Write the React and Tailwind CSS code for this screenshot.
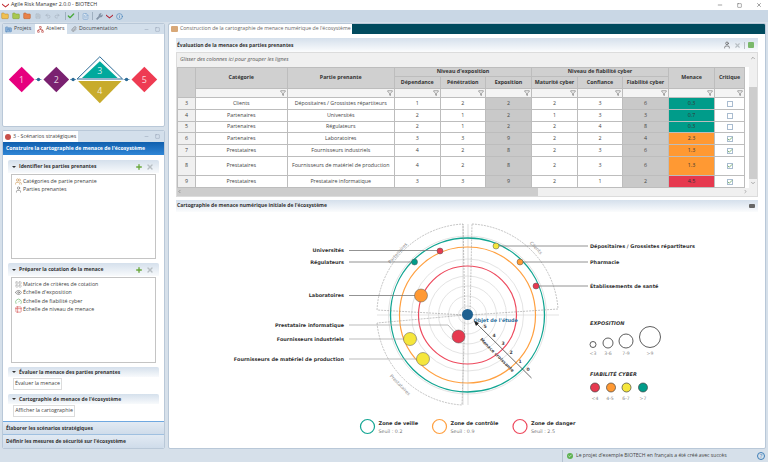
import { ChevronUp, ChevronDown, ChevronLeft, ChevronRight, Check, Filter, Plus, X, Minus, Square, Paperclip, Folder, Save, Undo2, Redo2, FileText, Wrench, Info, User, FolderKanban, Network, Table2, Users, Eye, Gauge, LayoutGrid } from 'lucide-react';

const rows = [
  { id: 3, cat: 'Clients', part: 'Dépositaires / Grossistes répartiteurs', dep: 1, pen: 2, exp: 2, mat: 2, conf: 3, fiab: 6, men: '0.3', bg: 'bg-[#009c8a]', crit: false, h: 'h-[12px]' },
  { id: 4, cat: 'Partenaires', part: 'Universités', dep: 2, pen: 1, exp: 2, mat: 1, conf: 3, fiab: 3, men: '0.7', bg: 'bg-[#009c8a]', crit: false, h: 'h-[12px]' },
  { id: 5, cat: 'Partenaires', part: 'Régulateurs', dep: 2, pen: 1, exp: 2, mat: 2, conf: 4, fiab: 8, men: '0.3', bg: 'bg-[#009c8a]', crit: false, h: 'h-[11px]' },
  { id: 6, cat: 'Partenaires', part: 'Laboratoires', dep: 3, pen: 3, exp: 9, mat: 2, conf: 2, fiab: 4, men: '2.3', bg: 'bg-[#ff9933]', crit: true, h: 'h-[12px]' },
  { id: 7, cat: 'Prestataires', part: 'Fournisseurs industriels', dep: 4, pen: 2, exp: 8, mat: 2, conf: 3, fiab: 6, men: '1.3', bg: 'bg-[#ff9933]', crit: true, h: 'h-[12px]' },
  { id: 8, cat: 'Prestataires', part: 'Fournisseurs de matériel de production', dep: 4, pen: 2, exp: 8, mat: 2, conf: 3, fiab: 6, men: '1.3', bg: 'bg-[#ff9933]', crit: true, h: 'h-[19px]' },
  { id: 9, cat: 'Prestataires', part: 'Prestataire informatique', dep: 3, pen: 3, exp: 9, mat: 2, conf: 1, fiab: 2, men: '4.5', bg: 'bg-[#e6394f]', crit: true, h: 'h-[12px]' },
];

const cell = 'border border-[#bdbdbd] p-0 text-center';
const th = 'border border-[#bdbdbd] bg-[#d0d0d0] p-0 text-center font-bold text-[#333]';

function FilterCell() {
  return (
    <td className={`${cell} bg-[#f4f4f4]`}>
      <div className="flex justify-end pr-[1px]">
        <Filter size={6} className="text-[#555]" strokeWidth={2} />
      </div>
    </td>
  );
}

function SectionHeader({ title, actions, small }) {
  return (
    <div className={`mx-[5px] flex shrink-0 items-center rounded-t-[2px] bg-gradient-to-b from-[#d5e0ec] to-[#f8fafc] pl-[4px] pr-[5px] ${small ? 'h-[10px]' : 'h-[13px]'}`}>
      <span className="mr-[3px] h-0 w-0 border-x-[2px] border-t-[2px] border-x-transparent border-t-[#333]" />
      <span className="flex-1 text-[5px] font-bold text-[#333]">{title}</span>
      {actions && (
        <div className="flex items-center gap-[3px]">
          <Plus size={8} strokeWidth={4} className="text-[#6aa83c]" />
          <X size={8} strokeWidth={4} className="text-[#b8bfc4]" />
        </div>
      )}
    </div>
  );
}

function ListBox({ items, className }) {
  return (
    <div className={`mx-[8px] mt-[1px] shrink-0 border border-[#c4c4c4] bg-white pl-[3px] pt-[2px] ${className}`}>
      {items.map(([label, Icon, color]) => (
        <div key={label} className="flex h-[8.5px] items-center gap-[1px] text-[#444]">
          <Icon size={7} strokeWidth={2} className={color} />
          {label}
        </div>
      ))}
    </div>
  );
}

function Diamonds() {
  return (
    <svg width="161" height="93" viewBox="3 34 161 93">
      <polygon points="21,67 34,80 21,93 8,80" fill="#e6007e" />
      <polygon points="56,67 69,80 56,93 43,80" fill="#7a2170" />
      <polygon points="100,57 123,79.5 77,79.5" fill="#fff" stroke="#2a6a96" strokeWidth="1" />
      <polygon points="100,61.5 118,78.5 82,78.5" fill="#00a99d" />
      <polygon points="78,81.5 122,81.5 100,104" fill="#c8ab2c" />
      <polygon points="145,67 158,80 145,93 132,80" fill="#ee3b52" />
      {[38, 73, 127].map((x) => (
        <g key={x}>
          <line x1={x - 3} x2={x + 3} y1="80" y2="80" stroke="#2a6a96" strokeWidth="0.7" />
          <circle cx={x} cy="80" r="1.7" fill="#2a6a96" />
        </g>
      ))}
      <g fill="#fff" fillOpacity="0.8" fontFamily="'Open Sans', sans-serif" fontSize="9" textAnchor="middle">
        <text x="21" y="84">1</text>
        <text x="56" y="84">2</text>
        <text x="100" y="74.5">3</text>
        <text x="100" y="95">4</text>
        <text x="145" y="84">5</text>
      </g>
    </svg>
  );
}

function Radar() {
  const pts = [
    [439, 251, 3, '#e6394f'],
    [413.5, 262, 3, '#009c8a'],
    [420, 295.5, 6.5, '#ff9933'],
    [457.5, 336.5, 6.5, '#e6394f'],
    [409, 339, 6.5, '#f5e63c'],
    [422, 359, 6.5, '#f5e63c'],
    [495, 246, 3, '#f5e63c'],
    [519, 262, 3, '#ff9933'],
    [535, 286, 3, '#e6394f'],
  ];
  const left = [
    ['Universités', 252],
    ['Régulateurs', 263.5],
    ['Laboratoires', 297],
    ['Prestataire informatique', 327],
    ['Fournisseurs industriels', 340.5],
    ['Fournisseurs de matériel de production', 361],
  ];
  const right = [
    ['Dépositaires / Grossistes répartiteurs', 247.5],
    ['Pharmacie', 263.5],
    ['Établissements de santé', 288],
  ];
  const font = "'DejaVu Sans', sans-serif";
  return (
    <svg width="596" height="236" viewBox="168 212 596 236" fontFamily={font} className="shrink-0">
      {/* fond gris */}
      {[9, 19, 29, 39, 56, 79].map((r) => (
        <circle key={r} cx="466.5" cy="315" r={r} fill="none" stroke="#e4e4e4" strokeWidth="1" />
      ))}
      <line x1="376" x2="558" y1="315" y2="315" stroke="#dcdcdc" strokeWidth="0.8" />
      <line x1="462" x2="462" y1="224" y2="405" stroke="#c8c8c8" strokeWidth="0.6" />
      <line x1="467" x2="467" y1="224" y2="405" stroke="#c8c8c8" strokeWidth="0.6" />

      <circle cx="466.5" cy="315" r="49" fill="none" stroke="#ee4a5e" strokeWidth="1.2" />
      <circle cx="466.5" cy="315" r="68" fill="none" stroke="#ffa040" strokeWidth="1.2" />
      <circle cx="466.5" cy="315" r="77" fill="none" stroke="#12a592" strokeWidth="1.3" />

      {/* secteurs */}
      <g fill="none" stroke="#888" strokeWidth="0.5" strokeDasharray="2 1">
        <path d="M376 310 A91 91 0 0 1 462 224 L464 315 Z" />
        <path d="M376 323 A91 91 0 0 0 461 405 L464 315 Z" />
        <path d="M471 224 A91 91 0 0 1 557 309 L469 315 Z" />
      </g>
      <g fill="#888" fontSize="4.6" textAnchor="middle">
        <text x="398" y="254" transform="rotate(-48 398 254)">Partenaires</text>
        <text x="398" y="386" transform="rotate(46 398 386)">Prestataires</text>
        <text x="534" y="249" transform="rotate(46 534 249)">Clients</text>
      </g>

      {/* liens */}
      <g fill="none" stroke="#777" strokeWidth="0.8">
        <path d="M348 250.5 H439" />
        <path d="M348 262 H413" />
        <path d="M348 295.5 H420" />
        <path d="M348 325 H447 L457 336" stroke="#aaa" />
        <path d="M348 339 H409" stroke="#aaa" />
        <path d="M348 359 H422" stroke="#aaa" />
        <path d="M495 246 H587" />
        <path d="M519 262 H587" />
        <path d="M535 286 H587" />
      </g>
      {pts.map(([x, y, r, c]) => (
        <circle key={`${x}-${y}`} cx={x} cy={y} r={r} fill={c} stroke="#555" strokeWidth="0.5" />
      ))}
      <circle cx="466.5" cy="314.5" r="5.5" fill="#1f6191" />
      <text x="472.5" y="321.5" fill="#2a6f9e" fontSize="4.9" fontWeight="bold">Objet de l'étude</text>

      {left.map(([t, y]) => (
        <text key={t} x="343" y={y} textAnchor="end" fontSize="4.95" fontWeight="bold" fill="#333">{t}</text>
      ))}
      {right.map(([t, y]) => (
        <text key={t} x="589" y={y} fontSize="4.95" fontWeight="bold" fill="#333">{t}</text>
      ))}

      {/* echelle */}
      <line x1="530.5" y1="378" x2="474" y2="322" stroke="#444" strokeWidth="0.8" />
      <polygon points="473,321 478,323 475,326" fill="#222" />
      <text x="495" y="356" transform="rotate(45 495 356)" textAnchor="middle" fontSize="4.4" fontWeight="bold" fill="#444">Menace croissante</text>
      <g fontSize="4.6" fontWeight="bold" fill="#444" textAnchor="middle">
        {[['5', 484, 328], ['4', 493, 337], ['3', 502, 345], ['2', 510, 354], ['1', 519, 363], ['0', 527, 371]].map(([n, x, y]) => (
          <text key={n} x={x} y={y}>{n}</text>
        ))}
      </g>

      {/* legendes */}
      <text x="589" y="325" fontSize="5" fontWeight="bold" fontStyle="italic" fill="#333">EXPOSITION</text>
      {[[592, 344.5, 3], [607, 343, 5], [625, 341, 7], [649, 337, 10.5]].map(([x, y, r]) => (
        <circle key={x} cx={x} cy={y} r={r} fill="#fff" stroke="#333" strokeWidth="0.8" />
      ))}
      <g fontSize="4.6" fill="#888" textAnchor="middle">
        <text x="592" y="355">&lt;3</text>
        <text x="607" y="355">3-6</text>
        <text x="625" y="355">7-9</text>
        <text x="649" y="355">&gt;9</text>
      </g>
      <text x="589" y="376" fontSize="5" fontWeight="bold" fontStyle="italic" fill="#333">FIABILITÉ CYBER</text>
      {[[594, '#e6394f'], [610, '#ff9933'], [625.5, '#f5e63c'], [642, '#009c8a']].map(([x, c]) => (
        <circle key={x} cx={x} cy="387.5" r="4.5" fill={c} stroke="#444" strokeWidth="0.7" />
      ))}
      <g fontSize="4.6" fill="#888" textAnchor="middle">
        <text x="594" y="399.5">&lt;4</text>
        <text x="609" y="399.5">4-5</text>
        <text x="625" y="399.5">6-7</text>
        <text x="642" y="399.5">&gt;7</text>
      </g>

      {[
        [366.5, '#12a592', 'Zone de veille', 'Seuil : 0.2'],
        [438.5, '#ffa040', 'Zone de contrôle', 'Seuil : 0.9'],
        [519, '#ee4a5e', 'Zone de danger', 'Seuil : 2.5'],
      ].map(([x, c, t, s]) => (
        <g key={t}>
          <circle cx={x} cy="426.5" r="7" fill="none" stroke={c} strokeWidth="1.2" />
          <text x={x + 11} y="424.5" fontSize="5" fontWeight="bold" fill="#333">{t}</text>
          <text x={x + 11} y="432.5" fontSize="4.8" fill="#777">{s}</text>
        </g>
      ))}
    </svg>
  );
}

export default function App() {
  return (
    <div className="flex h-[462px] w-[768px] flex-col overflow-hidden bg-[#d6e0ea] font-['Open_Sans',sans-serif] text-[5.3px] leading-none text-[#444]">
      {/* barre de titre */}
      <div className="flex h-[10px] shrink-0 items-center bg-white pl-[2px] pr-[4px]">
        <svg width="7" height="5" viewBox="0 0 10 6" className="mr-[2px]">
          <path d="M0 0 L5 4 L10 0 L10 2 L5 6 L0 2 Z" fill="#c0272d" />
        </svg>
        <span className="flex-1 text-[#333]">Agile Risk Manager 2.0.0 - BIOTECH</span>
        <div className="flex items-center gap-[14px] pr-[2px] text-[#444]">
          <Minus size={6} />
          <Square size={5} />
          <X size={6} />
        </div>
      </div>

      {/* barre d'outils */}
      <div className="flex h-[12px] shrink-0 items-center bg-[#c9d7e5] pl-[1px]">
        <Folder size={8} fill="#f0c050" strokeWidth={1.5} className="text-[#b8862a]" />
        <Folder size={8} fill="#a8c850" strokeWidth={1.5} className="ml-[3px] text-[#7a9a30]" />
        <Folder size={8} fill="#e8824a" strokeWidth={1.5} className="ml-[3px] text-[#b85a2a]" />
        <Save size={6} fill="#c2ccd6" strokeWidth={1.5} className="ml-[4px] text-[#a9b6c3]" />
        <Undo2 size={6} strokeWidth={3} className="ml-[4px] text-[#a9b6c3]" />
        <Redo2 size={6} strokeWidth={3} className="ml-[3px] text-[#a9b6c3]" />
        <span className="ml-[5px] h-[8px] w-px bg-[#9fb0c0]" />
        <Check size={8} strokeWidth={4} className="ml-[1px] text-[#4aa83c]" />
        <span className="ml-[3px] h-[8px] w-px bg-[#9fb0c0]" />
        <FileText size={7} fill="#e8eef4" strokeWidth={1.5} className="ml-[3px] text-[#4d86c0]" />
        <span className="ml-[3px] h-[8px] w-px bg-[#9fb0c0]" />
        <Wrench size={7} fill="#8a9aac" strokeWidth={1.5} className="ml-[3px] text-[#6f8194]" />
        <svg width="7" height="5" viewBox="0 0 10 6" className="ml-[3px]">
          <path d="M0 0 L5 4 L10 0 L10 2 L5 6 L0 2 Z" fill="#b02030" />
        </svg>
        <Info size={7} strokeWidth={2} className="ml-[3px] text-[#3f7fb8]" />
      </div>

      <div className="flex min-h-0 flex-1 gap-[3px] px-[2px] pb-[1px] pt-[1px]">
        {/* colonne gauche */}
        <div className="flex w-[163px] flex-col gap-[3px]">
          <div className="flex h-[104px] shrink-0 flex-col overflow-hidden rounded-[2px] border border-[#b9c8d8] bg-white">
            <div className="flex h-[10px] shrink-0 items-stretch bg-[#d3dfeb]">
              <div className="flex w-[32px] items-center gap-[2px] pl-[2px]">
                <FolderKanban size={7} fill="#8fb4da" strokeWidth={1.5} className="text-[#3f78b4]" />
                Projets
              </div>
              <div className="flex w-[32px] items-center gap-[2px] bg-white pl-[2px]">
                <Network size={7} strokeWidth={2} className="text-[#c0504a]" />
                Ateliers
              </div>
              <div className="flex items-center gap-[2px] pl-[4px]">
                <Paperclip size={6} className="text-[#777]" />
                Documentation
              </div>
              <div className="ml-auto flex items-center gap-[6px] pr-[4px] text-[#8a9aac]">
                <Minus size={5} />
                <Square size={5} />
              </div>
            </div>
            <Diamonds />
          </div>

          <div className="flex min-h-0 flex-1 flex-col overflow-hidden rounded-[2px] border border-[#b9c8d8] bg-white">
            <div className="flex h-[11px] shrink-0 items-stretch bg-[#d3dfeb]">
              <div className="flex items-center gap-[2px] bg-white px-[2px]">
                <span className="h-[6px] w-[6px] rounded-full bg-[#c8504a]" />
                3 - Scénarios stratégiques
              </div>
              <div className="ml-auto flex items-center gap-[6px] pr-[4px] text-[#8a9aac]">
                <Minus size={5} />
                <Square size={5} />
              </div>
            </div>
            <div className="flex h-[13px] shrink-0 items-center bg-gradient-to-b from-[#0f5fae] to-[#2f86d6] pl-[3px] text-[5.15px] font-bold text-white">
              Construire la cartographie de menace de l'écosystème
            </div>
            <div className="flex min-h-0 flex-1 flex-col pt-[5px]">
              <SectionHeader title="Identifier les parties prenantes" actions />
              <ListBox
                className="h-[85px]"
                items={[['Catégories de partie prenante', Users, 'text-[#c8904a]'], ['Parties prenantes', User, 'text-[#666]']]}
              />
              <div className="h-[4px] shrink-0" />
              <SectionHeader title="Préparer la cotation de la menace" actions />
              <ListBox
                className="h-[86px]"
                items={[
                  ['Matrice de critères de cotation', LayoutGrid, 'text-[#aaa]'],
                  ["Échelle d'exposition", Eye, 'text-[#666]'],
                  ['Échelle de fiabilité cyber', Gauge, 'text-[#5cae5c]'],
                  ['Échelle de niveau de menace', Table2, 'text-[#d85a5a]'],
                ]}
              />
              <div className="h-[4px] shrink-0" />
              <SectionHeader small title="Évaluer la menace des parties prenantes" />
              <button type="button" className="ml-[10px] mt-[1px] h-[12px] w-[49px] shrink-0 border border-[#dcdcdc] bg-white text-[#444]">Évaluer la menace</button>
              <div className="h-[4px] shrink-0" />
              <SectionHeader small title="Cartographie de menace de l'écosystème" />
              <button type="button" className="ml-[10px] mt-[1px] h-[12px] w-[62px] shrink-0 border border-[#dcdcdc] bg-white text-[#444]">Afficher la cartographie</button>
            </div>
            <div className="flex h-[13px] shrink-0 items-center border-t border-[#6fa8e0] bg-gradient-to-b from-[#e2eaf3] to-[#cfdcea] pl-[3px] text-[5px] font-bold text-[#333]">
              Élaborer les scénarios stratégiques
            </div>
            <div className="flex h-[14px] shrink-0 items-center border-t border-[#9fc0e0] bg-gradient-to-b from-[#e2eaf3] to-[#cfdcea] pl-[3px] text-[5px] font-bold text-[#333]">
              Définir les mesures de sécurité sur l'écosystème
            </div>
          </div>
        </div>

        {/* zone principale */}
        <div className="flex min-w-0 flex-1 flex-col overflow-hidden rounded-[2px] border border-[#b9c8d8] bg-white">
          <div className="flex h-[10px] shrink-0 bg-[#004a5e]">
            <div className="flex w-[183px] items-center gap-[2px] whitespace-nowrap bg-white pl-[2px] text-[5.15px] text-[#666]">
              <span className="h-[6px] w-[7px] shrink-0 rounded-[1px] bg-[#d8a878]" />
              Construction de la cartographie de menace numérique de l'écosystème
            </div>
          </div>

          <div className="mx-[7px] mt-[4px] flex h-[14px] shrink-0 items-center justify-between bg-gradient-to-b from-[#d5e0ec] to-[#fbfcfd] px-[1px] text-[5px] font-bold text-[#333]">
            Évaluation de la menace des parties prenantes
            <div className="flex items-center gap-[3px] pr-[3px]">
              <User size={8} strokeWidth={2} className="text-[#555]" />
              <X size={7} strokeWidth={4} className="text-[#b8bfc4]" />
              <span className="h-[7px] w-px bg-[#b8bfc4]" />
              <span className="h-[6px] w-[6px] rounded-[1px] bg-[#7ab86a]" />
            </div>
          </div>

          <div className="mx-[7px] flex shrink-0 border border-[#dcdcdc]">
            <div className="w-[572px]">
              <div className="flex h-[14px] items-center bg-[#f0f0f0] pl-[3px] italic text-[#555]">
                Glisser des colonnes ici pour grouper les lignes
              </div>
              <table className="w-[572px] table-fixed border-collapse">
                <colgroup>
                  <col className="w-[18px]" />
                  <col className="w-[91.5px]" />
                  <col className="w-[107.5px]" />
                  <col className="w-[45.5px]" />
                  <col className="w-[45.5px]" />
                  <col className="w-[46px]" />
                  <col className="w-[46px]" />
                  <col className="w-[45px]" />
                  <col className="w-[46px]" />
                  <col className="w-[46px]" />
                  <col className="w-[30px]" />
                  <col className="w-[5px]" />
                </colgroup>
                <thead>
                  <tr className="h-[9px]">
                    <th rowSpan={3} className={th} />
                    <th rowSpan={2} className={th}>Catégorie</th>
                    <th rowSpan={2} className={th}>Partie prenante</th>
                    <th colSpan={3} className={th}>Niveau d'exposition</th>
                    <th colSpan={3} className={th}>Niveau de fiabilité cyber</th>
                    <th rowSpan={2} className={th}>Menace</th>
                    <th rowSpan={2} className={th}>Critique</th>
                    <th rowSpan={3} className="p-0" />
                  </tr>
                  <tr className="h-[12px]">
                    <th className={th}>Dépendance</th>
                    <th className={th}>Pénétration</th>
                    <th className={th}>Exposition</th>
                    <th className={th}>Maturité cyber</th>
                    <th className={th}>Confiance</th>
                    <th className={th}>Fiabilité cyber</th>
                  </tr>
                  <tr className="h-[9px]">
                    {Array.from({ length: 10 }, (_, i) => <FilterCell key={i} />)}
                  </tr>
                </thead>
                <tbody>
                  {rows.map((r) => (
                    <tr key={r.id} className={r.h}>
                      <td className={`${cell} bg-[#f0f0f0]`}>{r.id}</td>
                      <td className={cell}>{r.cat}</td>
                      <td className={cell}>{r.part}</td>
                      <td className={cell}>{r.dep}</td>
                      <td className={cell}>{r.pen}</td>
                      <td className={`${cell} bg-[#c9c9c9]`}>{r.exp}</td>
                      <td className={cell}>{r.mat}</td>
                      <td className={cell}>{r.conf}</td>
                      <td className={`${cell} bg-[#c9c9c9]`}>{r.fiab}</td>
                      <td className={`${cell} ${r.bg} text-[#333]`}>{r.men}</td>
                      <td className={cell}>
                        <div className="flex justify-center">
                          <span className="flex h-[6px] w-[6px] items-center justify-center border border-[#a9bcd0] bg-white">
                            {r.crit && <Check size={6} strokeWidth={3} className="shrink-0 text-[#5a9a50]" />}
                          </span>
                        </div>
                      </td>
                      <td className="p-0" />
                    </tr>
                  ))}
                </tbody>
              </table>
              <div className="flex h-[7.5px] items-center bg-[#f0f0f0]">
                <div className="flex h-full w-[361px] items-center bg-[#cdcdcd]">
                  <ChevronLeft size={5} className="text-[#555]" />
                </div>
                <ChevronRight size={5} className="ml-auto mr-[1px] text-[#555]" />
              </div>
            </div>
            <div className="flex w-[8px] flex-col items-center bg-[#f0f0f0]">
              <ChevronUp size={6} className="mt-[2px] text-[#666]" />
              <div className="mt-[26px] h-[92px] w-full bg-[#cdcdcd]" />
              <ChevronDown size={6} className="mt-[1px] text-[#666]" />
            </div>
          </div>

          <div className="mx-[7px] mt-[3px] flex h-[12px] shrink-0 items-center justify-between bg-gradient-to-b from-[#d5e0ec] to-[#fbfcfd] px-[1px] text-[5px] font-bold text-[#333]">
            Cartographie de menace numérique initiale de l'écosystème
            <span className="mr-[2px] h-[4px] w-[6px] rounded-[1px] bg-[#666]" />
          </div>
          <Radar />
        </div>
      </div>

      {/* barre d'etat */}
      <div className="flex h-[12px] shrink-0 items-center justify-end">
        <div className="flex h-full w-[206px] items-center border-l border-[#b4c2d0] pl-[4px] text-[5.1px]">
          <span className="mr-[3px] flex h-[6px] w-[6px] items-center justify-center rounded-full bg-[#5cb050]">
            <Check size={4} strokeWidth={4} className="text-white" />
          </span>
          <span className="flex-1 text-[#444]">Le projet d'exemple BIOTECH en français a été créé avec succès</span>
          <span className="mr-[3px] flex h-[8px] w-[8px] items-center justify-center rounded-full border border-[#3f7fb8] text-[6px] text-[#3f7fb8]">?</span>
        </div>
      </div>
    </div>
  );
}
